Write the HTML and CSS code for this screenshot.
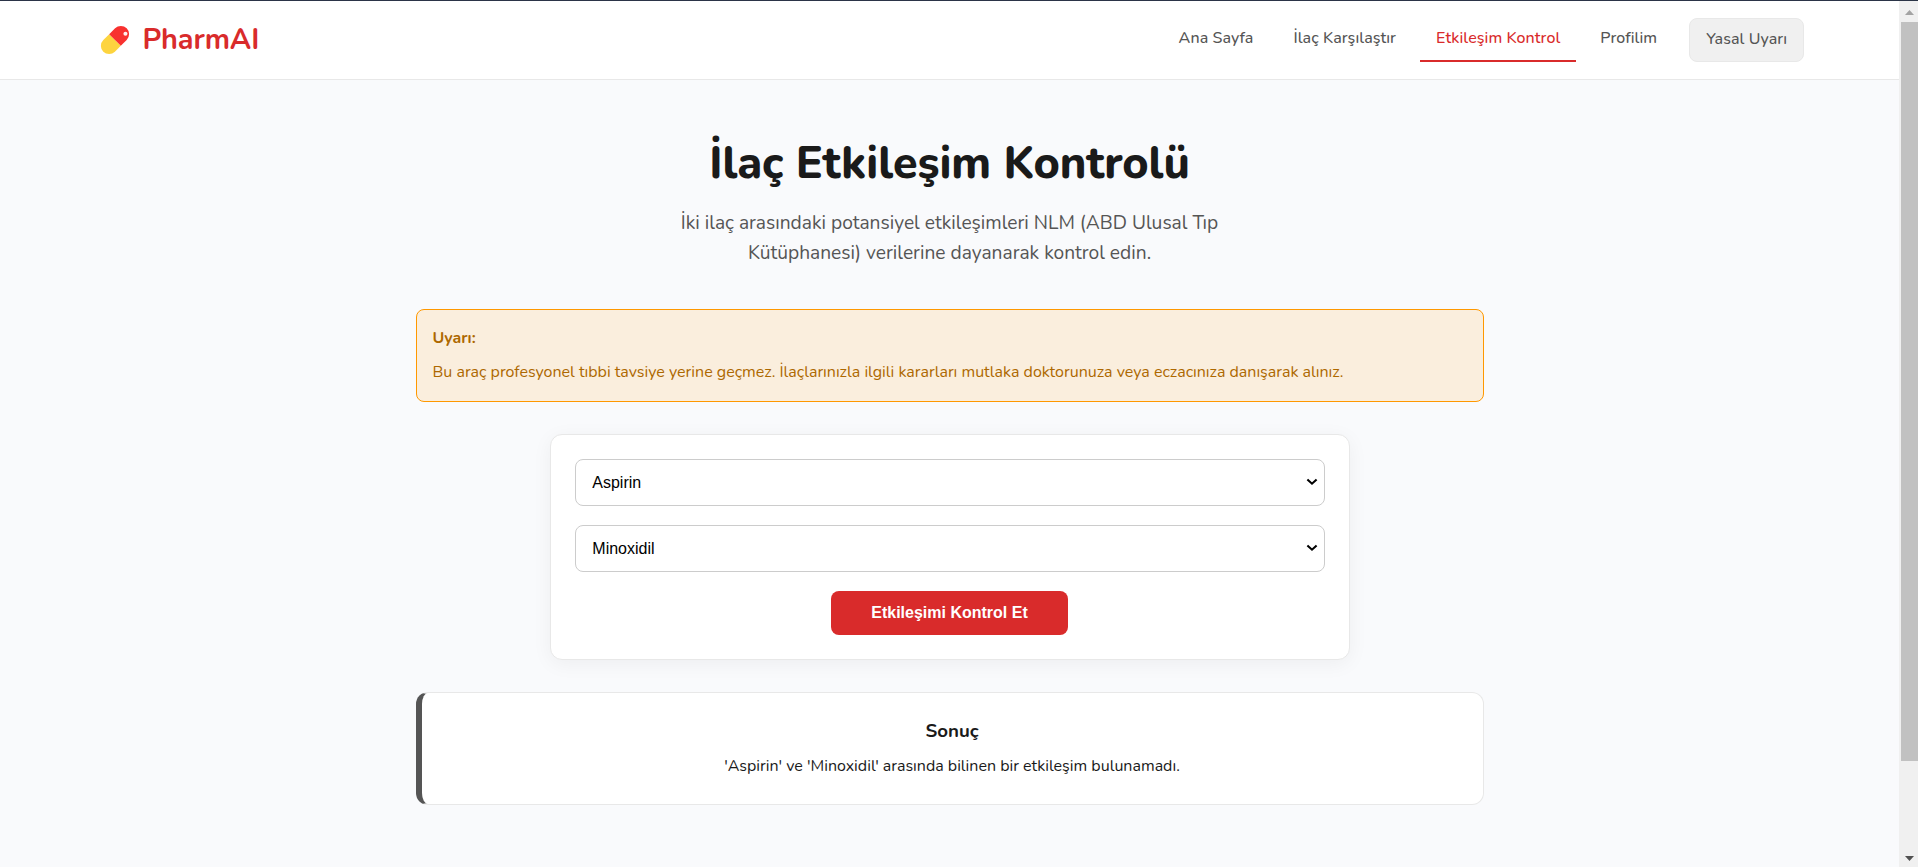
FILE: index.html
```html
<!DOCTYPE html>
<html lang="tr">
<head>
<meta charset="utf-8">
<title>PharmAI</title>
<link rel="stylesheet" href="styles.css">
</head>
<body>
<div class="window">
  <div class="page">
    <header class="header">
      <a class="logo">
        <svg class="logo-icon" width="32" height="32" viewBox="0 0 30 30">
          <g transform="rotate(-45 15 15)">
            <path d="M15 7.3H7.2a7.7 7.7 0 0 0 0 15.4H15z" fill="#fdd43f"/>
            <path d="M15 7.3h7.8a7.7 7.7 0 0 1 0 15.4H15z" fill="#f8312f"/>
          </g>
          <circle cx="24.8" cy="9.2" r="1.9" fill="#fff" fill-opacity=".92"/>
        </svg>
        <span>PharmAI</span>
      </a>
      <nav class="nav">
        <a class="nav-link">Ana Sayfa</a>
        <a class="nav-link">İlaç Karşılaştır</a>
        <a class="nav-link active">Etkileşim Kontrol</a>
        <a class="nav-link">Profilim</a>
        <a class="nav-button">Yasal Uyarı</a>
      </nav>
    </header>
    <main class="main">
      <h1 class="title">İlaç Etkileşim Kontrolü</h1>
      <p class="subtitle">İki ilaç arasındaki potansiyel etkileşimleri NLM (ABD Ulusal Tıp Kütüphanesi) verilerine dayanarak kontrol edin.</p>
      <section class="warning">
        <strong>Uyarı:</strong>
        <p>Bu araç profesyonel tıbbi tavsiye yerine geçmez. İlaçlarınızla ilgili kararları mutlaka doktorunuza veya eczacınıza danışarak alınız.</p>
      </section>
      <form class="checker">
        <div class="field">
          <select class="select"><option>Aspirin</option></select>
          <svg class="chevron" width="12" height="8" viewBox="0 0 12 8"><path d="M1.4 1.5L6 5.7l4.6-4.2" fill="none" stroke="#000" stroke-width="2.1"/></svg>
        </div>
        <div class="field">
          <select class="select"><option>Minoxidil</option></select>
          <svg class="chevron" width="12" height="8" viewBox="0 0 12 8"><path d="M1.4 1.5L6 5.7l4.6-4.2" fill="none" stroke="#000" stroke-width="2.1"/></svg>
        </div>
        <button class="submit" type="button">Etkileşimi Kontrol Et</button>
      </form>
      <section class="result">
        <h3>Sonuç</h3>
        <p>'Aspirin' ve 'Minoxidil' arasında bilinen bir etkileşim bulunamadı.</p>
      </section>
    </main>
  </div>
  <div class="scrollbar">
    <svg class="arrow" width="17" height="21" viewBox="0 0 17 21"><path d="M4 14h9L8.5 9z" fill="#a3a3a3"/></svg>
    <div class="thumb"></div>
    <svg class="arrow" width="17" height="17" viewBox="0 0 17 17"><path d="M4 6h9l-4.5 5z" fill="#505050"/></svg>
  </div>
</div>
</body>
</html>
```
FILE: styles.css
```css
* { box-sizing: border-box; margin: 0; padding: 0; }

body {
  font-family: Nunito, "Open Sans", sans-serif;
  font-size: 16px;
  line-height: 1.6;
  color: #1a1a1a;
  background: #f9fafc;
  overflow: hidden;
}

.window {
  display: grid;
  grid-template-columns: 1fr 19px;
  height: 867px;
  border-top: 1px solid #2b3447;
}

.header {
  display: flex;
  justify-content: space-between;
  align-items: center;
  padding: 16px 5%;
  background: #fff;
  border-bottom: 1px solid #e8e8e8;
}

.logo {
  display: flex;
  align-items: center;
  gap: 11px;
  padding-left: 4.5px;
  font-size: 28.8px;
  font-weight: 700;
  letter-spacing: -0.1px;
  color: #d92b2b;
}

.logo-icon { margin-bottom: 1px; }

.nav { display: flex; align-items: center; gap: 8px; }

.nav-link {
  padding: 8px 16px;
  font-weight: 500;
  letter-spacing: 0.07px;
  color: #555;
  border-bottom: 2px solid transparent;
}

.nav-link.active { color: #d92b2b; border-bottom-color: #d92b2b; }

.nav-button {
  margin-left: 8px;
  padding: 8px 16px;
  font-weight: 500;
  letter-spacing: 0.07px;
  color: #555;
  background: #f0f0f0;
  border: 1px solid #e8e8e8;
  border-radius: 8px;
}

.main {
  max-width: 1100px;
  margin: 0 auto;
  padding: 48px 16px;
}

.title {
  font-size: 44.8px;
  font-weight: 800;
  letter-spacing: -0.1px;
  text-align: center;
  margin-bottom: 8px;
}

.subtitle {
  max-width: 600px;
  margin: 0 auto 40px;
  font-size: 19.2px;
  color: #555;
  text-align: center;
}

.warning {
  padding: 16px;
  margin-bottom: 32px;
  color: #ad6800;
  background: #faeedd;
  border: 1px solid #ff9800;
  border-radius: 8px;
}

.warning strong { display: block; margin-bottom: 8px; }

.checker {
  display: flex;
  flex-direction: column;
  gap: 19.2px;
  max-width: 800px;
  margin: 0 auto 32px;
  padding: 24px;
  background: #fff;
  border: 1px solid #e8e8e8;
  border-radius: 12px;
  box-shadow: 0 4px 20px rgba(0, 0, 0, 0.05);
}

.field { display: grid; align-items: center; }

.field > * { grid-area: 1 / 1; }

.select {
  appearance: none;
  width: 100%;
  height: 46.8px;
  padding: 12.8px 16.8px;
  font: 16px "Liberation Sans", Arial, sans-serif;
  color: #000;
  background: #fff;
  border: 1px solid #ccc;
  border-radius: 8px;
}

.chevron { justify-self: end; margin: 0 7px 1px 0; pointer-events: none; }

.submit {
  align-self: center;
  padding: 12.8px 40px;
  font: bold 16px "Liberation Sans", Arial, sans-serif;
  color: #fff;
  background: #d92b2b;
  border: 0;
  border-radius: 8px;
}

.result {
  padding: 24px;
  text-align: center;
  background: #fff;
  border: 1px solid #e8e8e8;
  border-left: 6px solid #555;
  border-radius: 12px;
}

.result h3 { font-size: 18.72px; margin-bottom: 7.4px; }

.scrollbar {
  display: flex;
  flex-direction: column;
  padding-left: 2px;
  background: #f0f0f0;
}

.arrow { display: block; }
.thumb { height: 739px; margin-bottom: auto; background: #c1c1c1; }
```
